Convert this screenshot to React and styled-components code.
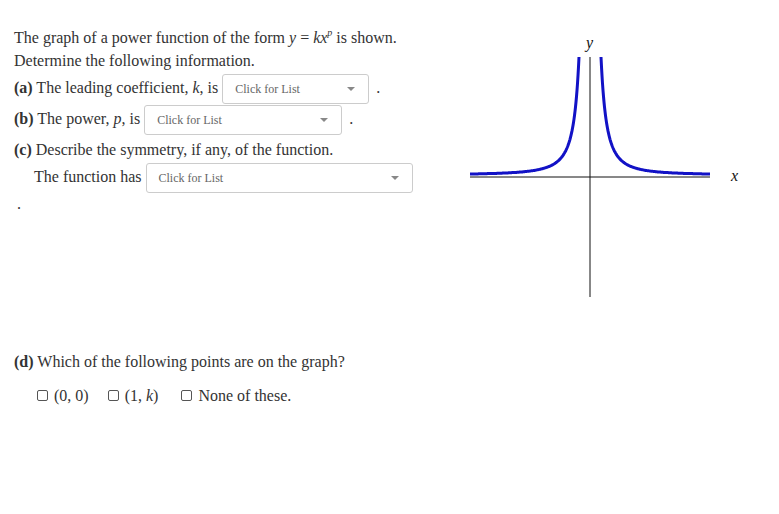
import React from "react";
import styled, { createGlobalStyle } from "styled-components";

const GlobalStyle = createGlobalStyle`
  html, body {
    margin: 0;
    padding: 0;
    background: #fff;
  }
  body {
    font-family: "Liberation Serif", "Times New Roman", serif;
    font-size: 16px;
    color: #333;
  }
`;

const Page = styled.div`
  display: flex;
  width: 779px;
  height: 514px;
  overflow: hidden;
`;

const Questions = styled.div`
  width: 446px;
  padding: 26px 0 0 14px;
  box-sizing: border-box;
`;

const Line = styled.div`
  height: ${(p) => p.$h || 23}px;
  line-height: ${(p) => p.$h || 23}px;
  padding-top: ${(p) => p.$pt || 0}px;
  padding-left: ${(p) => p.$indent || 0}px;
  margin-top: ${(p) => p.$mt || 0}px;
  white-space: nowrap;
`;

const Label = styled.b`
  font-weight: bold;
`;

const Var = styled.i`
  font-style: italic;
`;

const Sup = styled.sup`
  font-size: 10px;
  font-style: italic;
  vertical-align: 7px;
  line-height: 0;
`;

const Select = styled.span`
  display: inline-flex;
  align-items: center;
  justify-content: space-between;
  vertical-align: middle;
  box-sizing: border-box;
  width: ${(p) => p.$w}px;
  height: 30px;
  margin-left: 4px;
  padding: 0 13px 0 12px;
  border: 1px solid #ccc;
  border-radius: 3px;
  background: #fff;
  font-size: 12px;
  line-height: 1;
  color: #666;
`;

const Caret = styled.span`
  width: 0;
  height: 0;
  border-left: 4px solid transparent;
  border-right: 4px solid transparent;
  border-top: 4px solid #888;
`;

const Period = styled.span`
  margin-left: 7px;
`;

const Checks = styled.div`
  display: flex;
  align-items: center;
  height: 23px;
  padding-left: 23px;
  margin-top: 11px;
  white-space: pre;
`;

const Check = styled.span`
  display: inline-flex;
  align-items: center;
  margin-right: ${(p) => p.$gap || 18}px;
`;

const Box = styled.span`
  width: 9px;
  height: 9px;
  border: 1px solid #555;
  border-radius: 2px;
  margin-right: 6px;
`;

const Graph = styled.svg`
  display: block;
  margin: 20px 0 0 14px;
  flex: none;
`;

const GraphText = styled.text`
  font-family: "Liberation Serif", "Times New Roman", serif;
  font-style: italic;
  font-size: 16px;
  fill: #111;
`;

const Dropdown = ({ width }) => (
  <Select $w={width}>
    <span>Click for List</span>
    <Caret />
  </Select>
);

const curve = (side) => {
  const pts = [];
  const c = 14300;
  for (let d = 120; d >= 11; d -= 0.5) {
    const h = c / (d * d);
    const y = Math.max(37, 155 - h);
    pts.push(`${(130 + side * d).toFixed(1)},${y.toFixed(1)}`);
  }
  return pts.join(" ");
};

const App = () => (
  <>
    <GlobalStyle />
    <Page>
      <Questions>
        <Line>
          The graph of a power function of the form <Var>y</Var> = <Var>kx</Var>
          <Sup>p</Sup> is shown.
        </Line>
        <Line>Determine the following information.</Line>
        <Line $h={31}>
          <Label>(a)</Label> The leading coefficient, <Var>k</Var>, is
          <Dropdown width={147} />
          <Period>.</Period>
        </Line>
        <Line $h={31}>
          <Label>(b)</Label> The power, <Var>p</Var>, is
          <Dropdown width={198} />
          <Period>.</Period>
        </Line>
        <Line $pt={4}>
          <Label>(c)</Label> Describe the symmetry, if any, of the function.
        </Line>
        <Line $h={31} $indent={20}>
          The function has
          <Dropdown width={267} />
        </Line>
        <Line $indent={3}>.</Line>
        <Line $mt={135}>
          <Label>(d)</Label> Which of the following points are on the graph?
        </Line>
        <Checks>
          <Check $gap={19}>
            <Box />
            (0, 0)
          </Check>
          <Check $gap={23}>
            <Box />
            (1, <Var>k</Var>)
          </Check>
          <Check>
            <Box />
            None of these.
          </Check>
        </Checks>
      </Questions>
      <Graph width="300" height="290" viewBox="0 0 300 290">
        <line x1="10" y1="157" x2="250" y2="157" stroke="#111" strokeWidth="1" />
        <line x1="130" y1="37" x2="130" y2="277" stroke="#111" strokeWidth="1" />
        <polyline points={curve(-1)} fill="none" stroke="#1212c6" strokeWidth="3" />
        <polyline points={curve(1)} fill="none" stroke="#1212c6" strokeWidth="3" />
        <GraphText x="126" y="28">y</GraphText>
        <GraphText x="271" y="161">x</GraphText>
      </Graph>
    </Page>
  </>
);

export default App;
